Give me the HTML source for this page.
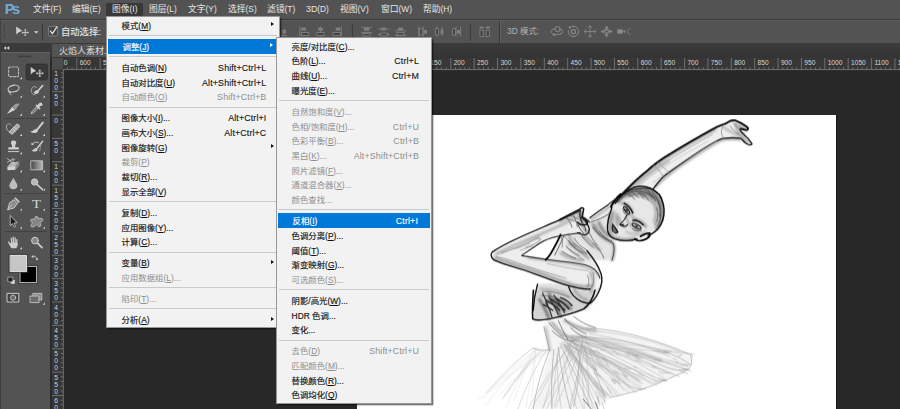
<!DOCTYPE html>
<html lang="zh-CN">
<head>
<meta charset="utf-8">
<title>Photoshop</title>
<style>
html,body{margin:0;padding:0;}
body{width:900px;height:409px;overflow:hidden;position:relative;background:#282828;font-family:"Liberation Sans","Noto Sans CJK SC",sans-serif;}
.abs{position:absolute;}
#menubar{left:0;top:0;width:900px;height:19px;background:#535353;}
#menubar .mi{position:absolute;top:3px;height:13px;line-height:13px;font-size:8.8px;color:#e6e6e6;white-space:nowrap;}
#menubar .mi .p{font-size:8.3px;}
#menubar .act{position:absolute;left:106px;top:3px;width:37px;height:13px;background:#383838;border-radius:1px;}
#mbline{left:0;top:19px;width:900px;height:1px;background:#3a3a3a;}
#optbar{left:0;top:20px;width:900px;height:23px;background:#535353;border-top:1px solid #5f5f5f;box-sizing:border-box;}
#optline{left:0;top:43px;width:900px;height:1px;background:#3a3a3a;}
#tabstrip{left:50.4px;top:44px;width:850px;height:14px;background:linear-gradient(#3b3b3b,#343434);}
#tab{left:52px;top:44px;width:100px;height:12.8px;background:#535353;color:#dcdcdc;font-size:9px;line-height:15px;padding-left:7px;box-sizing:border-box;white-space:nowrap;}
#tools{left:0;top:44px;width:50.4px;height:365px;background:#535353;border-left:1px solid #3e3e3e;box-sizing:border-box;}
#toolshead{left:1px;top:44px;width:49.4px;height:8.4px;background:#3a3a3a;border-bottom:0.6px solid #626262;}
#hruler{left:52px;top:58px;width:848px;height:12px;background:#3c3c3c;}
#vruler{left:52px;top:58px;width:11px;height:351px;background:#3c3c3c;}
#canvasimg{left:357px;top:114.7px;width:478.5px;height:295px;background:#fff;box-shadow:1px 0 0 #1a1a1a;}
.menu{position:absolute;background:#f2f2f2;border:1px solid #979797;box-shadow:1.5px 1.5px 1.5px rgba(0,0,0,0.55);box-sizing:border-box;font-size:8.4px;color:#111;}
.menu .it{position:absolute;left:0;right:0;height:14.7px;line-height:14.7px;white-space:nowrap;}
.menu .it .l{position:absolute;left:14px;top:1.0px;-webkit-text-stroke:0.15px currentColor;}
.menu .it .r{position:absolute;right:13px;top:1.0px;font-size:8.9px;letter-spacing:0.12px;-webkit-text-stroke:0.1px currentColor;}
.menu .it .ar{position:absolute;right:4.5px;top:4.4px;width:0;height:0;border-left:3.7px solid #111;border-top:2.8px solid transparent;border-bottom:2.8px solid transparent;}
.menu .hl .ar{border-left-color:#fff;}
.menu u{text-decoration:underline;text-underline-offset:1px;text-decoration-thickness:0.7px;}
.menu .dis{color:#8e8e8e;}
.menu .dis .l,.menu .dis .r{-webkit-text-stroke:0 !important;}
.menu .hl{background:#0078d7;color:#fff;left:1px;right:1px;}
.menu .sep{position:absolute;left:2px;right:2px;height:1px;background:#c9c9c9;}
</style>
</head>
<body>
<div id="menubar" class="abs">
<div class="act"></div>
<svg class="abs" style="left:4px;top:2px" width="18" height="14"><text x="0.8" y="11.8" font-family="Liberation Sans,sans-serif" font-weight="bold" font-size="14.5" fill="#74a9dc" textLength="15.4">Ps</text></svg>
<span class="mi" style="left:33px">文件<span class="p">(F)</span></span>
<span class="mi" style="left:72px">编辑<span class="p">(E)</span></span>
<span class="mi" style="left:112px">图像<span class="p">(I)</span></span>
<span class="mi" style="left:149px">图层<span class="p">(L)</span></span>
<span class="mi" style="left:188px">文字<span class="p">(Y)</span></span>
<span class="mi" style="left:228px">选择<span class="p">(S)</span></span>
<span class="mi" style="left:267px">滤镜<span class="p">(T)</span></span>
<span class="mi" style="left:306px">3D<span class="p">(D)</span></span>
<span class="mi" style="left:340px">视图<span class="p">(V)</span></span>
<span class="mi" style="left:381px">窗口<span class="p">(W)</span></span>
<span class="mi" style="left:423px">帮助<span class="p">(H)</span></span>
</div>
<div id="mbline" class="abs"></div>
<div id="optbar" class="abs"></div>
<div id="optline" class="abs"></div>
<!--OPT-->
<svg id="optsvg" class="abs" style="left:0;top:0" width="900" height="44" viewBox="0 0 900 44">
<!-- gripper -->
<path d="M4,25 V39" stroke="#424242" stroke-width="1.6" stroke-dasharray="1 1" fill="none"/><path d="M0.5,20 V43" stroke="#444" stroke-width="1"/>
<!-- move tool icon -->
<path d="M16.2,26.4 L16.2,34.6 L18.4,32.6 L22.2,30.8 Z" fill="#cfcfcf"/>
<g stroke="#cfcfcf" fill="none" stroke-width="0.9"><path d="M25.2,29.4 V35.8 M22,32.6 H28.4"/><path d="M24.3,30.4 L25.2,29.3 L26.1,30.4 M24.3,34.8 L25.2,35.9 L26.1,34.8 M23,31.7 L21.9,32.6 L23,33.5 M27.4,31.7 L28.5,32.6 L27.4,33.5" stroke-width="0.7"/></g>
<path d="M34,31.2 H38.4 L36.2,33.6 Z" fill="#d8d8d8"/>
<path d="M42.5,24 V40.5" stroke="#3a3a3a" stroke-width="1"/>
<!-- checkbox -->
<rect x="48.4" y="26.4" width="9.2" height="9.6" rx="1.4" fill="#454545" stroke="#8a8a8a" stroke-width="0.8"/>
<path d="M50,30.6 L52.4,33.6 L57.2,26.4" stroke="#e0e0e0" stroke-width="1.3" fill="none"/>
<!-- align icons (dim) -->
<g stroke="#858585" stroke-width="0.8" fill="none">
<rect x="282.4" y="29.6" width="3.6" height="4.2" fill="#7c7c7c" stroke="none"/><path d="M281,35.6 H287"/>
<path d="M299.8,26.5 V36.5"/><rect x="301.2" y="27.6" width="4.8" height="3" fill="#808080" stroke="none"/><rect x="301.4" y="32.6" width="7.4" height="2.8" fill="#444"/>
<path d="M320.5,26.5 V36.5"/><rect x="318.2" y="27.6" width="4.8" height="3" fill="#808080" stroke="none"/><rect x="316.8" y="32.6" width="7.4" height="2.8" fill="#444"/>
<path d="M341.3,26.5 V36.5"/><rect x="335.6" y="27.6" width="4.8" height="3" fill="#808080" stroke="none"/><rect x="333" y="32.6" width="7.4" height="2.8" fill="#444"/>
<!-- distribute -->
<path d="M361,27.4 H372.2 M361,32.4 H372.2"/><rect x="364" y="28" width="5.4" height="2.6" fill="#808080" stroke="none"/><rect x="363.2" y="33.4" width="7" height="2.6" fill="#444"/>
<path d="M378,29 H389.4 M378,34.5 H389.4"/><rect x="381.4" y="27.6" width="4.8" height="2.8" fill="#808080" stroke="none"/><rect x="380.2" y="33.2" width="7.2" height="2.6" fill="#444"/>
<path d="M395,30.8 H406.4 M395,35.6 H406.4"/><rect x="398" y="27.6" width="5" height="2.6" fill="#808080" stroke="none"/><rect x="397" y="32.4" width="7" height="2.6" fill="#444"/>
<path d="M418.7,26.5 V36.5 M423.2,26.5 V36.5"/><rect x="419.6" y="28.6" width="2.6" height="6.4" fill="#444"/><rect x="424" y="30" width="3" height="3.6" fill="#808080" stroke="none"/>
<path d="M437,26.5 V36.5 M442,27 V36"/><rect x="435.6" y="28.6" width="2.8" height="6.4" fill="#444"/><rect x="440.6" y="29.6" width="2.8" height="4.4" fill="#808080" stroke="none"/>
<path d="M456,26.5 V36.5 M460.6,26.5 V36.5"/><rect x="452.6" y="28.6" width="2.8" height="6.4" fill="#444"/><rect x="457" y="30" width="3" height="3.6" fill="#808080" stroke="none"/>
<!-- auto align -->
<rect x="479.6" y="26.6" width="4" height="2" fill="#808080" stroke="none"/><rect x="479.9" y="30.2" width="3.4" height="6.2" fill="#444"/>
<rect x="485.8" y="26.6" width="4" height="2" fill="#808080" stroke="none"/><rect x="486.1" y="30.2" width="3.4" height="6.2" fill="#444"/>
</g>
<path d="M352.4,24 V40.5 M470.5,24 V40.5" stroke="#3a3a3a" stroke-width="1"/>
<path d="M499.5,21 V43" stroke="#3a3a3a" stroke-width="1"/><path d="M500.5,21 V43" stroke="#626262" stroke-width="1"/>
<!-- 3D icons -->
<g stroke="#8c8c8c" stroke-width="1" fill="none" stroke-linecap="round">
<circle cx="557.6" cy="29.2" r="2.6"/><path d="M554.6,29 C551,29.4 549.6,32 552.6,33.6 C556,35.2 561.6,34.6 562.6,32.4 C563.2,31 561.6,29.8 560.4,29.6"/><path d="M552.4,35.8 L555.4,35.8 L553.6,33.4 Z" fill="#8c8c8c" stroke="none"/>
<path d="M569.8,27.6 A5.2,5.2 0 1 1 568.2,30.6"/><circle cx="573.4" cy="31.6" r="2.1" stroke-width="1.2"/><path d="M568.6,26.6 L571.4,26.8 L569.6,29.4 Z" fill="#8c8c8c" stroke="none"/>
<g stroke-width="0.8"><path d="M590,26 V37 M584.4,31.5 H595.6"/><path d="M588.4,27.6 L590,25.8 L591.6,27.6 M588.4,35.4 L590,37.2 L591.6,35.4 M586,29.9 L584.2,31.5 L586,33.1 M594,29.9 L595.8,31.5 L594,33.1"/></g>
<circle cx="606.6" cy="31.5" r="1.9" stroke-width="1.1"/>
<path d="M605,28.4 L606.6,26 L608.2,28.4 Z M605,34.6 L606.6,37 L608.2,34.6 Z M603.4,29.9 L601,31.5 L603.4,33.1 Z M609.8,29.9 L612.2,31.5 L609.8,33.1 Z" fill="#8c8c8c" stroke-width="0.5"/>
<rect x="617.4" y="29.4" width="5.4" height="4.2" fill="#8c8c8c" stroke="none"/><path d="M623,31.5 L625.2,29.8 V33.2 Z" fill="#8c8c8c" stroke="none"/>
<path d="M630,28.2 L626.8,31.5 L630,34.8" stroke-width="0.8"/>
</g>
</svg>
<div class="abs" style="left:61px;top:24.5px;font-size:9.3px;line-height:14px;color:#e4e4e4;white-space:nowrap;-webkit-text-stroke:0.12px #e4e4e4">自动选择:</div>
<div class="abs" style="left:507px;top:24.2px;font-size:8.4px;line-height:14px;color:#b2b2b2;white-space:nowrap;">3D 模式:</div>
<!--/OPT-->
<div id="tabstrip" class="abs"></div>
<div id="tab" class="abs">火焰人素材.jpg</div>
<div id="tools" class="abs"></div>
<div id="toolshead" class="abs"></div>
<!--TOOLS-->
<svg id="toolsvg" class="abs" style="left:0;top:0" width="52" height="409" viewBox="0 0 52 409">
<g fill="none" stroke="#cfcfcf" stroke-width="1" stroke-linecap="round" stroke-linejoin="round">
<!-- collapse arrows -->
<path d="M6.2,46 L3.8,48 L6.2,50 Z M9.2,46 L6.8,48 L9.2,50 Z" fill="#d6d6d6" stroke="none"/>
<!-- grip -->
<rect x="18" y="55.6" width="13.5" height="1.6" fill="#3c3c3c" stroke="none"/>
<!-- selected button -->
<rect x="26" y="64" width="21.5" height="16" rx="2" fill="#383838" stroke="#303030" stroke-width="0.8"/>
<!-- marquee -->
<rect x="8.6" y="67" width="9.9" height="9.6" rx="1" stroke-dasharray="2.1 1.45" stroke-dashoffset="1" stroke-width="1.1" stroke="#b8b8b8"/>
<!-- move -->
<path d="M30.8,67 L30.8,74.6 L32.8,72.6 L36.2,71 Z" fill="#cfcfcf" stroke="none"/>
<path d="M39.8,70 L39.8,76.6 M36.5,73.3 L43.1,73.3" stroke-width="0.9"/>
<path d="M38.9,71 L39.8,69.9 L40.7,71 M38.9,75.6 L39.8,76.7 L40.7,75.6 M37.5,72.4 L36.4,73.3 L37.5,74.2 M42.1,72.4 L43.2,73.3 L42.1,74.2" stroke-width="0.7"/>
<!-- lasso -->
<ellipse cx="13.6" cy="88.6" rx="5.6" ry="3.3" transform="rotate(-12 13.6 88.6)" stroke-width="1.1"/>
<path d="M9.2,91.2 C8.2,92 8.8,93.2 10,92.8 C11,92.4 10.6,91.4 9.6,91.8 C9.8,93 10.3,94 11,95" stroke-width="0.8"/>
<!-- quick select -->
<path d="M36.4,87.4 C33.4,85 30.8,88.5 31.4,91.5 C32,94 33.6,95 35.4,94.8" stroke-width="0.8" stroke="#bdbdbd" stroke-dasharray="1.6 0.8"/>
<path d="M42.6,85.6 L37.8,91" stroke-width="1.6"/>
<path d="M33.8,93 C34.4,90.4 37.2,89.6 39,91 C39,93.8 36,95 33.8,93 Z" fill="#cfcfcf" stroke="none"/>
<!-- slice knife -->
<path d="M6.8,114 L12.2,106.8 L15.4,109.8 Z" fill="#d0d0d0" stroke="none"/>
<path d="M12.6,106.4 L15.4,103.8 L19.9,103.5 L15.6,109.6 Z" fill="#9c9c9c" stroke="none"/>
<!-- eyedropper -->
<path d="M31.2,113.4 L32,111.4 L36.6,106.6 L38.2,108.2 L33.4,112.8 Z" stroke-width="0.8" fill="#777"/>
<path d="M36.4,105.4 L39.6,108.6" stroke-width="1.5"/>
<path d="M37.8,106.6 L40.4,104" stroke-width="2.6"/>
<circle cx="40.8" cy="104.4" r="1.7" fill="#cfcfcf" stroke="none"/>
<!-- healing brush -->
<path d="M11.2,125.2 C9.4,122.6 6.4,123.6 6.4,127 C6.6,130 8.6,132 10,132.6" stroke-width="0.8" stroke="#bdbdbd"/>
<path d="M10,131 L16.4,124.4 C17.6,123.2 20.4,125.8 19.2,127.2 L12.8,133.8 C11.4,135 8.8,132.4 10,131 Z" fill="#a8a8a8" stroke="#d4d4d4" stroke-width="0.8"/>
<path d="M12.4,128.4 L15.2,131.2 M14,126.8 L16.8,129.6" stroke="#e6e6e6" stroke-width="0.6"/>
<!-- brush -->
<path d="M42.8,122.6 L37.4,129.4" stroke-width="1.9"/>
<path d="M30.2,131.6 C32.6,131.6 34,129.4 35.8,128.8 C37.4,129.2 38,130.4 37.8,131.4 C36,133.6 32.4,133.6 30.2,131.6 Z" fill="#cfcfcf" stroke="none"/>
<!-- stamp -->
<path d="M12,141 C10.2,141.6 11,144 12,145.4 L12,147.2 L8.4,147.2 L8.4,149.6 L18.8,149.6 L18.8,147.2 L15.2,147.2 L15.2,145.4 C16.2,144 17,141.6 15.2,141 C14.2,140.4 13,140.4 12,141 Z" fill="#cfcfcf" stroke="none"/>
<path d="M8.4,151.6 L18.8,151.6" stroke-width="1"/>
<!-- history brush -->
<path d="M42.6,141.2 L37.4,148" stroke-width="1.4"/>
<path d="M31.6,150.4 C33.4,150.2 34.4,148.4 36,147.8 C37.4,148.2 37.8,149.2 37.6,150.2 C36,152 33.4,152 31.6,150.4 Z" fill="#cfcfcf" stroke="none"/>
<path d="M32,144.6 C33.4,142 36.4,141.6 38.4,142.6" stroke-width="0.9"/>
<path d="M31.2,142.6 L31.8,145 L34.2,144.6 Z" fill="#cfcfcf" stroke="none"/>
<path d="M40.6,146 L39.6,151.6" stroke-width="0.6" stroke-dasharray="1 1"/>
<!-- eraser -->
<path d="M7.4,166.4 L11,162.4 L19.4,161.4 L15.6,166 Z" fill="#b4b4b4" stroke="none"/>
<path d="M7.4,166.4 L15.6,166 L15.6,169.8 L7.4,170.2 Z" fill="#d4d4d4" stroke="none"/>
<path d="M15.6,166 L19.4,161.4 L19.4,165.2 L15.6,169.8 Z" fill="#8a8a8a" stroke="none"/>
<path d="M7.4,158.6 L12.6,162.6 M7.4,162.4 L12.8,159" stroke-width="0.8"/>
<circle cx="13.4" cy="159.6" r="1" stroke-width="0.6"/>
<circle cx="13.2" cy="163" r="1" stroke-width="0.6"/>
<!-- gradient -->
<rect x="31.2" y="160.8" width="11.4" height="9" fill="url(#gradtool)" stroke="#d0d0d0" stroke-width="0.8"/>
<!-- blur drop -->
<path d="M13.4,177.4 C12.6,180 9.2,183.4 9.4,186 C9.6,188.2 11.4,189.2 13.4,189.2 C15.4,189.2 17.2,188.2 17.4,186 C17.6,183.4 14.2,180 13.4,177.4 Z" fill="#bdbdbd" stroke="none"/>
<!-- dodge -->
<circle cx="34.6" cy="182" r="3.2" fill="#b8b8b8" stroke="#d0d0d0" stroke-width="0.8"/>
<path d="M37.2,184.6 L42.6,189.6" stroke-width="1.5"/>
<!-- pen -->
<path d="M7.8,209.4 L9.6,202.8 L14,199.6 L17.6,203.2 L14.4,207.6 Z" fill="#8c8c8c" stroke="#d4d4d4" stroke-width="0.9"/>
<path d="M7.8,209.4 L12.2,205" stroke-width="0.7"/>
<path d="M14.8,198.6 L18.8,202.6 L19.6,201.8 L15.6,197.8 Z" fill="#d4d4d4" stroke-width="0.6"/>
<!-- path select arrow -->
<path d="M10.2,215.8 L10.2,225.6 L12.4,223.6 L14,227.2 L15.6,226.4 L14,223 L16.8,222.8 Z" fill="#1c1c1c" stroke="#c8c8c8" stroke-width="0.8"/>
<!-- custom shape -->
<path d="M36,216.6 C37.6,216 38.6,217.6 38.4,219 C40,218 42.6,218 42.8,219.8 C43,221.6 40.6,222 39.8,222.8 C40.8,224 41.4,226 40,226.6 C38.4,227.2 37.4,225.4 36.4,224.6 C35.4,226 33.2,227.8 31.6,226.8 C30.2,225.8 31.6,223.6 32.6,222.6 C31.2,222 30,220.6 31,219.6 C32,218.6 33.8,219.4 34.8,219.4 C34.6,218.4 34.8,217 36,216.6 Z" fill="#858585" stroke="#c4c4c4" stroke-width="0.8"/>
<!-- hand -->
<path d="M11.3,238.4 L11.7,243.4 M13.2,237.2 L13.4,243.4 M15.1,237.8 L15.1,243.4 M16.9,239.6 L16.7,244" stroke="#cfcfcf" stroke-width="1.3"/>
<path d="M8.5,242.2 L10.8,245.6" stroke="#cfcfcf" stroke-width="1.4"/>
<path d="M10.6,243 L17.4,243 L17.3,245.8 L16.2,248 L11.4,248 L10.2,245.8 Z" fill="#cfcfcf" stroke="#cfcfcf" stroke-width="0.5"/>
<!-- zoom -->
<circle cx="35" cy="240.6" r="3.4" fill="#8a8a8a" stroke="#d0d0d0" stroke-width="1"/>
<path d="M37.8,243.4 L42,247.6" stroke-width="1.7"/>
<!-- swap -->
<path d="M32.4,256.4 C34.6,255.6 36.8,257 37,259.4" stroke-width="0.8"/>
<path d="M31.2,256.8 L33.4,255 L33.4,258 Z M35.6,258.6 L38.4,258.6 L37,260.8 Z" fill="#cfcfcf" stroke="none"/>
<!-- bg swatch -->
<rect x="20.3" y="266.3" width="16.4" height="16.4" fill="#000" stroke="#e8e8e8" stroke-width="0.9"/>
<rect x="19.4" y="265.4" width="18.2" height="18.2" stroke="#2e2e2e" stroke-width="0.7"/>
<!-- fg swatch -->
<rect x="10.3" y="255.3" width="16.4" height="16.4" fill="#c6c6c6" stroke="#f0f0f0" stroke-width="0.9"/>
<rect x="9.4" y="254.4" width="18.2" height="18.2" stroke="#2e2e2e" stroke-width="0.7"/>
<!-- default colors -->
<rect x="10.6" y="279.6" width="4.6" height="4.6" fill="#ddd" stroke="#333" stroke-width="0.6"/>
<rect x="8.2" y="277.2" width="4.6" height="4.6" fill="#222" stroke="#ccc" stroke-width="0.6"/>
<!-- quick mask -->
<rect x="7.4" y="293.4" width="11.4" height="8.6" stroke="#d8d8d8" stroke-width="0.9" fill="#444"/>
<circle cx="13.1" cy="297.7" r="2.6" stroke="#cfcfcf" stroke-width="0.8" fill="#6a6a6a"/>
<!-- screen mode -->
<rect x="33.2" y="293.4" width="8.6" height="6.6" stroke="#cfcfcf" stroke-width="0.8" fill="#888"/>
<rect x="30.4" y="296" width="8.6" height="6.6" stroke="#cfcfcf" stroke-width="0.8" fill="#6c6c6c"/>
</g>
<!-- separators -->
<g stroke="#414141" stroke-width="1">
<path d="M4,118.5 L47,118.5 M4,193.5 L47,193.5 M4,231.5 L47,231.5"/>
</g>
<!-- corner triangles -->
<g fill="#d8d8d8">
<path d="M22,77 L22,79.2 L19.8,79.2 Z M22,95.4 L22,97.6 L19.8,97.6 Z M45,95.4 L45,97.6 L42.8,97.6 Z M22,113.6 L22,115.8 L19.8,115.8 Z M45,113.6 L45,115.8 L42.8,115.8 Z M22,133.8 L22,136 L19.8,136 Z M45,133.8 L45,136 L42.8,136 Z M22,152 L22,154.2 L19.8,154.2 Z M45,152 L45,154.2 L42.8,154.2 Z M22,170 L22,172.2 L19.8,172.2 Z M45,170 L45,172.2 L42.8,172.2 Z M22,188.4 L22,190.6 L19.8,190.6 Z M45,188.4 L45,190.6 L42.8,190.6 Z M22,208.4 L22,210.6 L19.8,210.6 Z M45,208.4 L45,210.6 L42.8,210.6 Z M22,226.4 L22,228.6 L19.8,228.6 Z M45,226.4 L45,228.6 L42.8,228.6 Z M22,247 L22,249.2 L19.8,249.2 Z M45,302.6 L45,304.8 L42.8,304.8 Z"/>
</g>
<defs><linearGradient id="gradtool" x1="0" x2="1" y1="0" y2="0"><stop offset="0" stop-color="#4a4a4a"/><stop offset="1" stop-color="#b8b8b8"/></linearGradient></defs>
<text x="32" y="208.4" font-family="Liberation Serif,serif" font-size="13.5" fill="#d4d4d4" textLength="9" lengthAdjust="spacingAndGlyphs">T</text>
</svg>
<!--/TOOLS-->
<!--RULERS-->
<svg id="rulers" class="abs" style="left:0;top:0" width="900" height="409" viewBox="0 0 900 409">
<rect x="50.4" y="58" width="2" height="351" fill="#2c2c2c"/>
<rect x="52" y="58" width="848" height="12" fill="#373737"/>
<rect x="52" y="58" width="11.5" height="351" fill="#373737"/>
<rect x="52" y="58" width="11" height="11.5" fill="#4c4c4c"/>
<path d="M67.45,67.3 V69.5 M72.13,67.3 V69.5 M81.48,67.3 V69.5 M86.15,67.3 V69.5 M90.83,67.3 V69.5 M95.50,67.3 V69.5 M104.85,67.3 V69.5 M109.53,67.3 V69.5 M114.20,67.3 V69.5 M118.88,67.3 V69.5 M128.23,67.3 V69.5 M132.90,67.3 V69.5 M137.58,67.3 V69.5 M142.25,67.3 V69.5 M151.60,67.3 V69.5 M156.28,67.3 V69.5 M160.95,67.3 V69.5 M165.62,67.3 V69.5 M174.98,67.3 V69.5 M179.65,67.3 V69.5 M184.33,67.3 V69.5 M189.00,67.3 V69.5 M198.35,67.3 V69.5 M203.03,67.3 V69.5 M207.70,67.3 V69.5 M212.38,67.3 V69.5 M221.73,67.3 V69.5 M226.40,67.3 V69.5 M231.08,67.3 V69.5 M235.75,67.3 V69.5 M245.10,67.3 V69.5 M249.78,67.3 V69.5 M254.45,67.3 V69.5 M259.12,67.3 V69.5 M268.48,67.3 V69.5 M273.15,67.3 V69.5 M277.82,67.3 V69.5 M282.50,67.3 V69.5 M291.85,67.3 V69.5 M296.53,67.3 V69.5 M301.20,67.3 V69.5 M305.88,67.3 V69.5 M315.23,67.3 V69.5 M319.90,67.3 V69.5 M324.57,67.3 V69.5 M329.25,67.3 V69.5 M338.60,67.3 V69.5 M343.28,67.3 V69.5 M347.95,67.3 V69.5 M352.62,67.3 V69.5 M361.98,67.3 V69.5 M366.65,67.3 V69.5 M371.32,67.3 V69.5 M376.00,67.3 V69.5 M385.35,67.3 V69.5 M390.03,67.3 V69.5 M394.70,67.3 V69.5 M399.38,67.3 V69.5 M408.73,67.3 V69.5 M413.40,67.3 V69.5 M418.07,67.3 V69.5 M422.75,67.3 V69.5 M432.10,67.3 V69.5 M436.78,67.3 V69.5 M441.45,67.3 V69.5 M446.12,67.3 V69.5 M455.48,67.3 V69.5 M460.15,67.3 V69.5 M464.82,67.3 V69.5 M469.50,67.3 V69.5 M478.85,67.3 V69.5 M483.53,67.3 V69.5 M488.20,67.3 V69.5 M492.88,67.3 V69.5 M502.23,67.3 V69.5 M506.90,67.3 V69.5 M511.57,67.3 V69.5 M516.25,67.3 V69.5 M525.60,67.3 V69.5 M530.27,67.3 V69.5 M534.95,67.3 V69.5 M539.62,67.3 V69.5 M548.97,67.3 V69.5 M553.65,67.3 V69.5 M558.32,67.3 V69.5 M563.00,67.3 V69.5 M572.35,67.3 V69.5 M577.02,67.3 V69.5 M581.70,67.3 V69.5 M586.38,67.3 V69.5 M595.72,67.3 V69.5 M600.40,67.3 V69.5 M605.07,67.3 V69.5 M609.75,67.3 V69.5 M619.10,67.3 V69.5 M623.77,67.3 V69.5 M628.45,67.3 V69.5 M633.12,67.3 V69.5 M642.47,67.3 V69.5 M647.15,67.3 V69.5 M651.82,67.3 V69.5 M656.50,67.3 V69.5 M665.85,67.3 V69.5 M670.52,67.3 V69.5 M675.20,67.3 V69.5 M679.88,67.3 V69.5 M689.22,67.3 V69.5 M693.90,67.3 V69.5 M698.57,67.3 V69.5 M703.25,67.3 V69.5 M712.60,67.3 V69.5 M717.27,67.3 V69.5 M721.95,67.3 V69.5 M726.62,67.3 V69.5 M735.97,67.3 V69.5 M740.65,67.3 V69.5 M745.32,67.3 V69.5 M750.00,67.3 V69.5 M759.35,67.3 V69.5 M764.02,67.3 V69.5 M768.70,67.3 V69.5 M773.38,67.3 V69.5 M782.72,67.3 V69.5 M787.40,67.3 V69.5 M792.07,67.3 V69.5 M796.75,67.3 V69.5 M806.10,67.3 V69.5 M810.77,67.3 V69.5 M815.45,67.3 V69.5 M820.12,67.3 V69.5 M829.47,67.3 V69.5 M834.15,67.3 V69.5 M838.82,67.3 V69.5 M843.50,67.3 V69.5 M852.85,67.3 V69.5 M857.52,67.3 V69.5 M862.20,67.3 V69.5 M866.88,67.3 V69.5 M876.22,67.3 V69.5 M880.90,67.3 V69.5 M885.57,67.3 V69.5 M890.25,67.3 V69.5 M899.60,67.3 V69.5" stroke="#8a8a8a" stroke-width="0.7" fill="none"/>
<path d="M76.80,58 V69.5 M100.18,58 V69.5 M123.55,58 V69.5 M146.93,58 V69.5 M170.30,58 V69.5 M193.68,58 V69.5 M217.05,58 V69.5 M240.43,58 V69.5 M263.80,58 V69.5 M287.18,58 V69.5 M310.55,58 V69.5 M333.93,58 V69.5 M357.30,58 V69.5 M380.68,58 V69.5 M404.05,58 V69.5 M427.43,58 V69.5 M450.80,58 V69.5 M474.18,58 V69.5 M497.55,58 V69.5 M520.92,58 V69.5 M544.30,58 V69.5 M567.67,58 V69.5 M591.05,58 V69.5 M614.42,58 V69.5 M637.80,58 V69.5 M661.17,58 V69.5 M684.55,58 V69.5 M707.92,58 V69.5 M731.30,58 V69.5 M754.67,58 V69.5 M778.05,58 V69.5 M801.42,58 V69.5 M824.80,58 V69.5 M848.17,58 V69.5 M871.55,58 V69.5 M894.92,58 V69.5" stroke="#7c7c7c" stroke-width="0.8" fill="none"/>
<path d="M60.8,72.92 H63 M60.8,77.60 H63 M60.8,82.28 H63 M60.8,86.95 H63 M60.8,96.30 H63 M60.8,100.97 H63 M60.8,105.65 H63 M60.8,110.33 H63 M60.8,119.67 H63 M60.8,124.35 H63 M60.8,129.03 H63 M60.8,133.70 H63 M60.8,143.05 H63 M60.8,147.72 H63 M60.8,152.40 H63 M60.8,157.07 H63 M60.8,166.43 H63 M60.8,171.10 H63 M60.8,175.78 H63 M60.8,180.45 H63 M60.8,189.80 H63 M60.8,194.47 H63 M60.8,199.15 H63 M60.8,203.82 H63 M60.8,213.18 H63 M60.8,217.85 H63 M60.8,222.53 H63 M60.8,227.20 H63 M60.8,236.55 H63 M60.8,241.22 H63 M60.8,245.90 H63 M60.8,250.57 H63 M60.8,259.93 H63 M60.8,264.60 H63 M60.8,269.27 H63 M60.8,273.95 H63 M60.8,283.30 H63 M60.8,287.98 H63 M60.8,292.65 H63 M60.8,297.32 H63 M60.8,306.68 H63 M60.8,311.35 H63 M60.8,316.02 H63 M60.8,320.70 H63 M60.8,330.05 H63 M60.8,334.73 H63 M60.8,339.40 H63 M60.8,344.07 H63 M60.8,353.43 H63 M60.8,358.10 H63 M60.8,362.77 H63 M60.8,367.45 H63 M60.8,376.80 H63 M60.8,381.48 H63 M60.8,386.15 H63 M60.8,390.82 H63 M60.8,400.18 H63 M60.8,404.85 H63" stroke="#8a8a8a" stroke-width="0.7" fill="none"/>
<path d="M52,91.62 H63 M52,115.00 H63 M52,138.38 H63 M52,161.75 H63 M52,185.12 H63 M52,208.50 H63 M52,231.88 H63 M52,255.25 H63 M52,278.62 H63 M52,302.00 H63 M52,325.38 H63 M52,348.75 H63 M52,372.12 H63 M52,395.50 H63" stroke="#7c7c7c" stroke-width="0.8" fill="none"/>
<path d="M63,69.6 H900 M63.3,69.2 V409" stroke="#767676" stroke-width="0.9" fill="none"/>
<g font-family="Liberation Sans,sans-serif" font-size="6.6" fill="#d6d6d6">
<clipPath id="hrc"><rect x="63.7" y="58" width="840" height="12"/></clipPath><g clip-path="url(#hrc)">
<text x="56.3" y="65.3">650</text>
<text x="79.7" y="65.3">600</text>
<text x="103.1" y="65.3">550</text>
<text x="126.5" y="65.3">500</text>
<text x="149.8" y="65.3">450</text>
<text x="173.2" y="65.3">400</text>
<text x="196.6" y="65.3">350</text>
<text x="220.0" y="65.3">300</text>
<text x="243.3" y="65.3">250</text>
<text x="266.7" y="65.3">200</text>
<text x="290.1" y="65.3">150</text>
<text x="313.4" y="65.3">100</text>
<text x="336.8" y="65.3">50</text>
<text x="360.2" y="65.3">0</text>
<text x="383.6" y="65.3">50</text>
<text x="406.9" y="65.3">100</text>
<text x="430.3" y="65.3">150</text>
<text x="453.7" y="65.3">200</text>
<text x="477.1" y="65.3">250</text>
<text x="500.4" y="65.3">300</text>
<text x="523.8" y="65.3">350</text>
<text x="547.2" y="65.3">400</text>
<text x="570.6" y="65.3">450</text>
<text x="593.9" y="65.3">500</text>
<text x="617.3" y="65.3">550</text>
<text x="640.7" y="65.3">600</text>
<text x="664.1" y="65.3">650</text>
<text x="687.4" y="65.3">700</text>
<text x="710.8" y="65.3">750</text>
<text x="734.2" y="65.3">800</text>
<text x="757.6" y="65.3">850</text>
<text x="780.9" y="65.3">900</text>
<text x="804.3" y="65.3">950</text>
<text x="827.7" y="65.3">1000</text>
<text x="851.1" y="65.3">1050</text>
<text x="874.4" y="65.3">1100</text>
<text x="897.8" y="65.3">1150</text>
</g>
<text x="54.2" y="75.8">1</text>
<text x="54.2" y="82.8">0</text>
<text x="54.2" y="89.8">0</text>
<text x="54.2" y="99.2">5</text>
<text x="54.2" y="106.2">0</text>
<text x="54.2" y="122.6">0</text>
<text x="54.2" y="146.0">5</text>
<text x="54.2" y="153.0">0</text>
<text x="54.2" y="169.3">1</text>
<text x="54.2" y="176.3">0</text>
<text x="54.2" y="183.3">0</text>
<text x="54.2" y="192.7">1</text>
<text x="54.2" y="199.7">5</text>
<text x="54.2" y="206.7">0</text>
<text x="54.2" y="216.1">2</text>
<text x="54.2" y="223.1">0</text>
<text x="54.2" y="230.1">0</text>
<text x="54.2" y="239.5">2</text>
<text x="54.2" y="246.5">5</text>
<text x="54.2" y="253.5">0</text>
<text x="54.2" y="262.9">3</text>
<text x="54.2" y="269.9">0</text>
<text x="54.2" y="276.9">0</text>
<text x="54.2" y="286.2">3</text>
<text x="54.2" y="293.2">5</text>
<text x="54.2" y="300.2">0</text>
<text x="54.2" y="309.6">4</text>
<text x="54.2" y="316.6">0</text>
<text x="54.2" y="323.6">0</text>
<text x="54.2" y="333.0">4</text>
<text x="54.2" y="340.0">5</text>
<text x="54.2" y="347.0">0</text>
<text x="54.2" y="356.4">5</text>
<text x="54.2" y="363.4">0</text>
<text x="54.2" y="370.4">0</text>
<text x="54.2" y="379.7">5</text>
<text x="54.2" y="386.7">5</text>
<text x="54.2" y="393.7">0</text>
<text x="54.2" y="403.1">6</text>
<text x="54.2" y="410.1">0</text>
</g>
</svg>
<!--/RULERS-->
<div id="canvasimg" class="abs"></div>
<!--SKETCH-->
<svg id="sketch" class="abs" style="left:357px;top:114.7px" width="479" height="295" viewBox="357 114.7 479 295">
<defs>
<filter id="soft" x="-5%" y="-5%" width="110%" height="110%"><feGaussianBlur stdDeviation="1.1"/></filter>
<filter id="soft2" x="-5%" y="-5%" width="110%" height="110%"><feGaussianBlur stdDeviation="0.35"/></filter>
</defs>
<!--FILLS-->
<g stroke="none" filter="url(#soft)" opacity="0.95">
<g transform="translate(620,110) scale(0.21993)">
<path d="M0,392 C40,350 80,310 118,280 C150,250 190,220 232,196 C290,160 350,125 432,80 C470,66 500,48 524,46 C556,60 580,80 580,88 L548,88 C560,112 600,150 600,154 C580,156 556,130 548,128 C500,124 450,132 404,160 C320,214 224,282 152,356 C120,380 60,400 0,392 Z" fill="#eeeeee"/>
<path d="M516,60 L572,72 L582,88 L548,90 L562,112 L600,154 L570,150 L546,128 L528,100 Z" fill="#b8b8b8"/>
</g>
<g transform="translate(560,170) scale(0.21997)">
<path d="M250,150 C270,120 300,92 340,76 C380,66 420,80 450,110 C476,150 476,204 430,280 L400,300 C350,322 280,322 250,312 C218,292 210,250 236,170 Z" fill="#e6e6e6"/>
<path d="M262,140 C300,96 360,70 420,84 C460,110 480,170 466,230 C450,200 430,150 400,130 C360,110 310,116 262,140 Z" fill="#b4b4b4"/>
<path d="M130,240 C170,220 220,190 244,160 C226,210 220,270 250,312 C250,350 244,390 236,409 L60,409 C40,380 20,340 0,300 C40,290 90,270 130,240 Z" fill="#e2e2e2"/>
<path d="M0,226 C30,208 60,192 96,174 C112,176 104,200 104,214 C124,234 136,262 132,280 C120,296 90,290 60,276 C40,268 20,260 0,250 Z" fill="#ebebeb"/>
</g>
<g transform="translate(480,200) scale(0.2689)">
<path d="M372,38 C290,76 130,146 46,192 C38,200 40,212 52,222 C120,246 210,274 310,312 C350,324 390,332 410,330 C440,320 450,290 446,290 C440,262 420,248 390,240 C300,226 230,218 156,206 C180,188 204,172 223,159 C262,140 320,128 373,121 Z" fill="#ececec"/>
<path d="M214,312 C206,340 200,370 198,409 L400,409 C420,380 450,340 452,300 C440,330 420,334 400,330 C340,320 280,300 214,312 Z" fill="#dedede"/>
<path d="M300,128 C330,120 380,150 400,190 C430,230 450,260 450,280 C440,256 400,240 360,234 C320,230 280,226 246,222 C270,190 290,150 300,128 Z" fill="#e8e8e8"/>
</g>
<g transform="translate(440,290) scale(0.3111)">
<path d="M300,0 L498,0 C492,26 480,46 462,60 C400,84 330,98 298,92 Z" fill="#d0d0d0"/>
<path d="M334,100 C380,96 430,84 470,120 C560,124 700,160 812,212 C812,240 800,256 760,274 C700,300 620,328 545,346 L500,382 L300,382 C320,300 340,250 352,192 Z" fill="#f3f3f3"/>
</g>
</g>
<!--/FILLS-->
<!-- soft shading layer -->
<g fill="none" stroke-linecap="round" stroke-linejoin="round" filter="url(#soft)" opacity="0.9">
<g transform="translate(620,110) scale(0.21993)">
<path d="M10,384 C50,344 90,306 128,278 C160,250 200,222 240,198 C300,162 360,128 436,86" stroke="#8c8c8c" stroke-width="9"/>
<path d="M160,350 C200,310 250,270 300,236 C350,202 400,170 450,140 C480,130 520,130 550,134" stroke="#9a9a9a" stroke-width="9"/>
<path d="M470,76 C490,90 520,110 560,124 M520,56 C540,70 560,84 576,96" stroke="#a0a0a0" stroke-width="8"/>
<path d="M80,340 C120,300 170,262 220,232" stroke="#bbb" stroke-width="14"/>
<path d="M10,390 C60,370 120,372 170,400" stroke="#777" stroke-width="10"/>
</g>
<g transform="translate(560,170) scale(0.21997)">
<path d="M262,140 C290,106 330,88 370,88 C410,92 440,116 458,150 C466,190 462,230 440,264" stroke="#777" stroke-width="16"/>
<path d="M330,110 C360,104 400,116 430,150 C440,180 440,210 430,236" stroke="#aaa" stroke-width="16"/>
<path d="M232,190 C222,230 222,270 232,296 C260,312 300,318 340,310" stroke="#8a8a8a" stroke-width="10"/>
<path d="M244,190 C236,220 234,250 240,276 M260,200 C256,220 256,236 262,250" stroke="#9a9a9a" stroke-width="12"/>
<path d="M300,214 C310,236 326,260 350,280 M320,200 C330,214 344,226 360,232" stroke="#aaa" stroke-width="12"/>
<path d="M150,246 C164,276 186,300 214,318 M176,236 C186,260 200,280 220,296" stroke="#777" stroke-width="12"/>
<path d="M90,200 C92,230 104,260 124,284" stroke="#8a8a8a" stroke-width="12"/>
<path d="M280,150 C300,150 320,166 330,190 M334,226 C354,224 376,236 390,256" stroke="#777" stroke-width="10"/>
<path d="M268,214 C270,236 276,250 296,258" stroke="#999" stroke-width="10"/>
<path d="M300,280 C330,296 360,296 390,280" stroke="#b4b4b4" stroke-width="10"/>
<path d="M160,250 C180,290 210,316 244,336 C250,360 244,390 238,409" stroke="#999" stroke-width="12"/>
<path d="M100,290 C130,320 150,340 180,360 M40,330 C70,356 100,376 130,400" stroke="#9a9a9a" stroke-width="12"/>
<path d="M0,232 C30,214 60,200 90,188 M96,186 C96,206 104,226 120,240" stroke="#888" stroke-width="10"/>
<path d="M140,226 C170,206 210,180 244,150" stroke="#999" stroke-width="10"/>
</g>
<g transform="translate(480,200) scale(0.2689)">
<path d="M60,200 C110,176 170,150 230,124 C280,102 330,80 370,60" stroke="#9a9a9a" stroke-width="8"/>
<path d="M56,214 C100,230 150,246 200,262 C250,280 300,300 350,316 C380,322 400,322 420,316" stroke="#8a8a8a" stroke-width="9"/>
<path d="M180,214 C230,222 290,228 340,236 C380,242 420,254 440,280" stroke="#aaa" stroke-width="8"/>
<path d="M250,372 C276,380 300,394 316,409 M280,366 C304,374 324,388 336,402" stroke="#666" stroke-width="12"/>
<path d="M226,330 C260,330 300,340 336,360" stroke="#aaa" stroke-width="10"/>
<path d="M330,130 C340,160 366,186 396,200 M300,196 C320,210 350,220 380,224" stroke="#999" stroke-width="9"/>
<path d="M410,270 C424,294 424,320 412,340 M350,330 C360,350 380,366 400,372" stroke="#999" stroke-width="8"/>
<path d="M120,170 C150,160 190,144 220,136" stroke="#aaa" stroke-width="8"/>
</g>
<g transform="translate(440,290) scale(0.3111)">
<path d="M350,10 C364,36 378,60 388,84 M320,30 C334,52 344,72 350,90" stroke="#666" stroke-width="9"/>
<path d="M360,104 C380,130 400,150 440,160 M400,96 C430,116 460,128 500,130" stroke="#999" stroke-width="8"/>
<path d="M430,150 C520,160 620,186 710,226 M420,166 C490,200 570,244 640,290 M400,176 C440,230 490,290 530,340" stroke="#c8c8c8" stroke-width="10"/>
<path d="M340,120 C346,146 350,170 354,192" stroke="#bbb" stroke-width="8"/>
</g>
</g>
<!-- line layer -->
<g fill="none" stroke-linecap="round" stroke-linejoin="round" filter="url(#soft2)">
<!-- Region A: raised arm -->
<g transform="translate(620,110) scale(0.21993)">
<path d="M0,392 C40,350 80,310 118,280 C150,250 190,220 232,196 C290,160 350,125 432,80 C450,70 470,66 488,56 C500,48 512,44 524,46 C540,52 556,60 572,72 C580,78 586,82 580,88 C570,92 556,84 548,84" stroke="#0a0a0a" stroke-width="8.5"/>
<path d="M546,88 C548,100 566,112 580,126 C590,138 600,150 600,154 C594,160 580,156 570,148 C560,140 556,130 548,128 C530,124 500,124 470,128 C450,132 430,144 404,160 C360,186 320,214 280,242 C250,262 224,282 200,300 C180,318 164,340 152,356" stroke="#1c1c1c" stroke-width="6.5"/>
<path d="M470,66 C460,84 456,104 470,126" stroke="#777" stroke-width="3"/>
<path d="M520,62 C530,76 540,86 548,92 M500,70 C512,86 520,100 540,108 M560,100 C570,112 580,124 588,140" stroke="#666" stroke-width="3"/>
<path d="M60,346 C100,310 150,270 200,240 C260,204 330,160 420,110" stroke="#999" stroke-width="3"/>
<path d="M150,330 C200,290 260,250 330,206 C370,180 410,156 440,140" stroke="#a8a8a8" stroke-width="3"/>
<path d="M100,330 C140,296 190,262 250,226 C300,196 350,168 400,140" stroke="#bbb" stroke-width="2.5"/>
<path d="M168,234 C190,250 210,270 226,290 M150,250 C170,262 186,280 196,300" stroke="#888" stroke-width="3"/>
<path d="M20,380 C50,360 90,352 130,356 C160,362 180,380 190,400" stroke="#222" stroke-width="5"/>
<path d="M40,392 C60,380 90,376 110,384 M80,370 C100,380 120,392 130,409 M130,370 C146,384 156,396 160,409" stroke="#555" stroke-width="3.5"/>
</g>
<!-- Region B: head -->
<g transform="translate(560,170) scale(0.21997)">
<path d="M250,150 C270,120 300,92 340,76 C380,66 420,80 450,110 C470,140 476,170 472,204 C468,236 452,262 430,280 C420,290 410,294 400,296" stroke="#0a0a0a" stroke-width="6.5"/>
<path d="M236,170 C224,200 214,240 216,270 C218,292 228,304 250,312 C280,322 320,322 350,312" stroke="#0a0a0a" stroke-width="6"/>
<path d="M340,312 C350,322 372,322 392,312 C406,304 412,294 408,286 C396,284 380,292 366,300" stroke="#000" stroke-width="8"/>
<path d="M232,166 C242,144 258,124 276,108" stroke="#000" stroke-width="9"/>
<path d="M262,146 C280,120 310,100 344,96 C380,94 410,106 432,130" stroke="#444" stroke-width="4"/>
<path d="M340,80 C350,100 370,110 380,128 M380,76 C392,96 410,108 420,130 M420,96 C430,116 446,130 450,156 M448,140 C456,160 458,186 452,210 M300,100 C316,114 330,118 340,132 M360,84 C366,100 380,108 392,118 M400,90 C410,110 424,120 436,140 M436,120 C446,140 452,160 456,180 M320,92 C330,104 344,110 356,124 M456,190 C460,210 456,230 446,250 M440,170 C446,190 446,210 440,230" stroke="#555" stroke-width="3.5"/>
<path d="M440,180 C450,200 446,230 430,250" stroke="#888" stroke-width="4"/>
<!-- eyes -->
<ellipse cx="303" cy="182" rx="21" ry="8" transform="rotate(56 303 182)" stroke="#0a0a0a" stroke-width="4.5" fill="#9a9a9a"/>
<ellipse cx="303" cy="182" rx="7" ry="6" transform="rotate(56 303 182)" stroke="none" fill="#333"/>
<path d="M292,150 C306,158 322,174 331,194" stroke="#111" stroke-width="6.5"/>
<path d="M286,176 C288,190 296,202 308,208" stroke="#444" stroke-width="3.5"/>
<ellipse cx="348" cy="254" rx="23" ry="9" transform="rotate(30 348 254)" stroke="#0a0a0a" stroke-width="4.5" fill="#a8a8a8"/>
<ellipse cx="348" cy="254" rx="7" ry="6" transform="rotate(30 348 254)" stroke="none" fill="#444"/>
<path d="M331,228 C346,226 364,234 378,248" stroke="#111" stroke-width="6.5"/>
<path d="M330,266 C342,276 356,278 370,274" stroke="#444" stroke-width="3.5"/>
<!-- nose -->
<path d="M304,204 C298,218 290,230 280,238 C272,244 274,252 284,252 C294,256 304,254 308,246" stroke="#1a1a1a" stroke-width="5"/>
<path d="M272,246 C278,250 284,250 288,246" stroke="#000" stroke-width="5"/>
<!-- lips -->
<path d="M240,246 C248,256 258,266 264,282 C256,290 246,286 240,276 C236,266 236,256 240,246 Z" stroke="#0a0a0a" stroke-width="4.5" fill="#666"/>
<path d="M244,252 C252,264 258,272 262,282" stroke="#000" stroke-width="3.5"/>
<!-- hand near chin -->
<path d="M98,214 C112,224 126,242 134,268 C132,284 122,292 112,294 C100,292 90,288 80,284" stroke="#111" stroke-width="5.5"/>
<path d="M80,238 C84,256 92,272 106,284 M102,240 C110,250 116,262 118,276" stroke="#333" stroke-width="4"/>
<path d="M20,214 C40,220 60,226 78,236 M40,204 C56,208 70,214 84,222" stroke="#666" stroke-width="3"/>

<path d="M0,225 C30,208 60,192 88,178 C96,170 104,166 108,176 C106,190 100,200 102,214 C108,224 118,226 124,234 C128,244 120,250 108,248 C96,250 86,244 80,236" stroke="#0a0a0a" stroke-width="6.5"/>
<path d="M92,182 C88,200 92,220 100,236 M108,214 C116,220 128,226 134,236" stroke="#1a1a1a" stroke-width="5"/>
<path d="M136,216 C160,196 190,176 214,160 C226,150 240,140 250,132" stroke="#1a1a1a" stroke-width="5.5"/>
<path d="M140,236 C170,226 200,214 226,196" stroke="#555" stroke-width="4"/>
<!-- neck & collar shading -->
<path d="M150,260 C170,290 200,310 240,330 C250,350 246,380 236,409" stroke="#444" stroke-width="4.5"/>
<path d="M128,270 C140,300 150,320 170,340 M100,300 C116,320 130,336 150,350 M60,330 C80,346 100,356 120,380 M180,280 C196,300 214,314 236,322 M150,330 C170,350 190,370 200,400" stroke="#555" stroke-width="3.5"/>
<path d="M30,350 C50,370 80,390 110,409 M0,290 C10,310 14,330 10,350 M20,300 C36,320 50,336 70,350" stroke="#666" stroke-width="3"/>
</g>
<!-- Region C: bent arm & torso -->
<g transform="translate(480,200) scale(0.2689)">
<path d="M372,38 C350,48 320,60 290,76 C240,98 180,122 130,146 C100,160 70,176 46,192 C38,200 40,212 52,222 C80,236 120,246 160,258 C210,274 260,296 310,312 C350,324 390,332 410,330" stroke="#0a0a0a" stroke-width="5"/>
<path d="M156,204 C180,188 204,172 223,159 C240,148 262,140 290,134 C320,128 350,124 373,121" stroke="#1a1a1a" stroke-width="4"/>
<path d="M318,62 C330,72 338,84 342,100 M342,50 C352,62 360,78 362,98" stroke="#555" stroke-width="3"/>
<path d="M156,206 C190,212 230,218 262,222 C300,226 350,232 390,240 C420,248 440,262 446,290" stroke="#2a2a2a" stroke-width="4"/>
<path d="M300,128 C290,150 276,176 262,200 C254,212 248,218 244,222" stroke="#000" stroke-width="6.5"/>
<path d="M312,132 C302,156 290,180 278,204" stroke="#444" stroke-width="3"/>
<path d="M398,188 C420,214 440,244 450,272 C458,296 452,320 440,344 C430,364 420,376 408,384" stroke="#0a0a0a" stroke-width="5"/>
<path d="M330,322 C336,344 352,364 376,376 C392,382 404,384 410,382" stroke="#0a0a0a" stroke-width="5"/>
<path d="M214,312 C206,340 200,370 198,409" stroke="#0a0a0a" stroke-width="5"/>
<path d="M244,372 C262,380 280,392 296,409 M262,368 C282,378 300,392 314,409 M282,366 C300,374 318,388 330,404 M236,388 C250,394 262,402 270,409 M300,362 C316,368 332,378 342,392" stroke="#222" stroke-width="5"/>
<path d="M232,340 C260,336 300,346 330,360 M226,356 C246,352 262,356 280,362" stroke="#777" stroke-width="3"/>
<path d="M80,196 C110,186 150,170 190,152 C210,142 222,138 226,146 C214,160 190,168 170,176" stroke="#777" stroke-width="2.6"/>
<path d="M130,180 C150,176 170,166 186,160 M150,186 C166,180 180,174 196,170" stroke="#888" stroke-width="2.2"/>
<path d="M60,210 C100,216 130,230 170,244 C220,260 270,276 320,290" stroke="#999" stroke-width="3"/>
<path d="M100,236 C150,250 200,268 250,286 C290,300 330,312 360,318" stroke="#aaa" stroke-width="2.6"/>
<path d="M250,236 C300,246 350,256 400,262" stroke="#aaa" stroke-width="3"/>
<path d="M330,150 C340,170 360,186 384,196 M320,170 C334,186 350,196 370,206 M306,190 C320,200 336,210 356,216 M350,140 C360,160 376,174 396,184" stroke="#555" stroke-width="2.8"/>
<path d="M420,270 C426,290 424,310 414,326 M400,280 C408,296 406,312 398,324" stroke="#777" stroke-width="3"/>
</g>
<!-- Region D: tutu -->
<g transform="translate(440,290) scale(0.3111)">
<path d="M300,0 C298,30 296,60 298,92 C310,98 330,96 352,92 C390,84 430,74 462,60 C480,46 492,26 498,0" stroke="#0a0a0a" stroke-width="4.8"/>
<path d="M350,20 C360,40 372,56 380,78 M366,16 C380,36 392,54 400,72 M340,40 C350,56 356,70 360,86 M330,10 C340,30 346,44 350,60" stroke="#333" stroke-width="4"/>
<path d="M334,118 C340,140 346,166 352,192 M352,192 C330,196 312,192 300,186" stroke="#888" stroke-width="2.2"/>
<path d="M380,96 C390,120 400,140 412,160 M400,92 C420,110 440,128 470,140 M430,84 C450,100 470,112 500,120 M360,130 C380,150 400,160 430,164 M350,104 C366,124 380,140 396,150 M420,120 C436,136 450,146 470,152" stroke="#666" stroke-width="2.6"/>
<g stroke="#8c8c8c" stroke-width="1.7">
<path d="M470,122 C560,124 650,148 740,180 C770,192 796,202 812,212"/>
<path d="M440,150 C540,150 640,170 730,200 C760,212 790,226 806,240"/>
<path d="M430,160 C520,176 620,200 700,236 C740,254 770,262 796,254"/>
<path d="M420,166 C500,196 580,230 650,270 C680,288 706,296 724,288"/>
<path d="M410,170 C470,210 540,256 600,300 C620,314 640,322 660,316"/>
<path d="M400,176 C440,226 490,280 540,336"/>
<path d="M390,180 C420,240 450,300 480,370"/>
<path d="M380,184 C390,250 400,320 420,382"/>
<path d="M366,190 C360,250 356,320 360,382"/>
<path d="M352,192 C330,250 310,310 300,382"/>
<path d="M806,212 C812,226 810,244 796,256 C770,270 740,282 716,292 C690,304 660,316 630,324 C600,332 570,340 545,344"/>
</g>
<g stroke="#b0b0b0" stroke-width="1.5">
<path d="M480,140 C560,150 650,176 740,214"/>
<path d="M470,156 C550,180 640,216 720,260"/>
<path d="M450,170 C520,210 590,256 650,300"/>
<path d="M430,184 C480,236 530,290 570,340"/>
<path d="M410,196 C440,260 470,320 500,382"/>
<path d="M394,206 C404,270 420,330 440,382"/>
<path d="M340,196 C310,240 280,300 250,382"/>
<path d="M320,196 C280,240 240,290 200,350"/>
<path d="M300,186 C250,220 200,270 150,330"/>
<path d="M500,132 C590,138 680,160 770,196"/>
<path d="M460,164 C540,200 620,240 690,280"/>
<path d="M440,176 C500,220 560,270 610,316"/>
<path d="M420,190 C460,250 500,310 530,360"/>
<path d="M400,200 C420,260 440,320 460,382"/>
<path d="M376,204 C376,260 380,320 390,382"/>
</g>
<!--EXTRA-->
<path d="M401,145 Q593,172 809,204 M463,180 Q642,187 819,206 M396,145 Q606,204 798,245 M452,150 Q633,205 801,240 M459,144 Q629,192 799,257 M423,144 Q617,197 808,260 M462,169 Q616,221 771,278 M434,162 Q601,202 751,269 M384,171 Q550,226 718,289 M470,150 Q599,210 722,283 M412,177 Q560,229 685,303 M386,151 Q534,223 697,304 M396,163 Q533,253 647,317 M446,188 Q559,257 647,311 M417,187 Q519,248 633,327 M420,147 Q519,224 627,329 M384,148 Q490,227 608,328 M468,161 Q518,233 592,323 M441,147 Q492,257 557,338 M391,166 Q498,251 578,337 M402,161 Q460,263 532,343 M455,165 Q486,244 532,340 M401,183 Q467,270 510,353 M469,160 Q508,268 531,362 M424,145 Q469,277 492,386 M410,173 Q468,278 508,382 M439,174 Q464,269 464,387 M467,188 Q482,270 475,373 M467,173 Q451,276 428,375 M447,186 Q451,266 432,372 M459,146 Q449,267 419,385 M459,150 Q448,271 415,377 M422,166 Q397,269 367,373 M458,170 Q421,275 370,378 M381,182 Q371,274 359,373 M451,156 Q410,256 343,380 M390,171 Q359,286 331,380 M450,143 Q385,269 331,375 M418,180 Q340,273 281,386 M424,157 Q364,258 291,386" stroke="#a4a4a4" stroke-width="1.2"/>
<path d="M495,242 l13,14 M573,252 l20,19 M498,295 l14,22 M538,312 l11,18 M627,212 l14,9 M495,263 l20,16 M498,252 l5,10 M686,224 l26,2 M548,281 l14,20 M770,258 l26,10 M526,177 l13,6 M518,318 l13,16 M505,340 l6,19 M556,259 l20,14 M526,222 l12,13 M593,250 l19,4 M496,266 l8,9 M566,204 l10,4 M773,240 l24,1 M555,287 l13,7 M682,246 l11,1 M718,289 l12,3 M629,212 l21,7 M552,290 l13,9 M560,259 l15,7 M594,272 l9,5 M765,210 l12,-1 M685,194 l23,3 M503,220 l16,21 M619,207 l21,1 M704,283 l22,8 M703,261 l14,7 M537,332 l11,9 M603,196 l19,6 M689,294 l19,4 M500,326 l16,18 M507,344 l6,24 M757,230 l10,3 M718,202 l14,-0 M636,268 l19,9 M479,189 l16,11 M621,245 l12,5 M483,190 l13,12 M584,269 l17,8 M497,191 l18,10 M597,204 l13,7 M465,224 l12,14 M779,253 l24,1 M488,236 l11,19 M521,361 l7,21 M478,231 l8,19 M604,200 l23,14 M714,193 l20,9 M628,224 l17,7 M535,236 l8,7 M533,193 l23,14 M594,277 l9,10 M501,234 l21,14 M559,285 l18,14 M625,209 l10,2 M570,287 l12,13 M516,190 l13,2 M704,198 l20,4 M721,194 l21,4 M462,215 l16,15 M522,213 l17,11 M488,246 l10,13 M718,264 l21,2 M556,195 l10,4 M749,219 l12,5" stroke="#8a8a8a" stroke-width="1.3"/>
<path d="M309,192 Q222,268 145,370 M338,191 Q285,220 246,286 M302,187 Q255,276 213,374 M334,196 Q288,226 254,283 M310,183 Q265,268 237,356 M344,199 Q261,256 194,334 M317,183 Q212,266 124,351 M307,199 Q292,279 276,378 M333,183 Q273,249 209,339 M300,181 Q226,251 140,346 M348,183 Q264,246 160,327 M349,200 Q279,222 208,283 M313,192 Q264,248 206,341 M308,183 Q304,264 291,367" stroke="#d4d4d4" stroke-width="1.2"/>
<!--/EXTRA-->
<path d="M460,350 C470,362 480,372 486,382 M500,360 C504,370 506,376 508,382" stroke="#555" stroke-width="2.6"/>
</g>
</g>
</svg>
<!--/SKETCH-->
<!--MENUS-->
<div class="menu" id="m1" style="left:106px;top:16.4px;width:173.6px;height:312.0px">
<div class="it" style="top:0.40px"><span class="l" style="left:14.6px">模式(<u>M</u>)</span><i class="ar"></i></div>
<div class="sep" style="top:17.68px"></div>
<div class="it hl" style="top:21.47px"><span class="l" style="left:14.6px">调整(<u>J</u>)</span><i class="ar"></i></div>
<div class="sep" style="top:38.75px"></div>
<div class="it" style="top:42.54px"><span class="l" style="left:14.6px">自动色调(<u>N</u>)</span><span class="r" style="right:12.2px">Shift+Ctrl+L</span></div>
<div class="it" style="top:57.23px"><span class="l" style="left:14.6px">自动对比度(<u>U</u>)</span><span class="r" style="right:12.2px">Alt+Shift+Ctrl+L</span></div>
<div class="it dis" style="top:71.92px"><span class="l" style="left:14.6px">自动颜色(<u>O</u>)</span><span class="r" style="right:12.2px">Shift+Ctrl+B</span></div>
<div class="sep" style="top:89.20px"></div>
<div class="it" style="top:92.99px"><span class="l" style="left:14.6px">图像大小(<u>I</u>)...</span><span class="r" style="right:12.2px">Alt+Ctrl+I</span></div>
<div class="it" style="top:107.68px"><span class="l" style="left:14.6px">画布大小(<u>S</u>)...</span><span class="r" style="right:12.2px">Alt+Ctrl+C</span></div>
<div class="it" style="top:122.37px"><span class="l" style="left:14.6px">图像旋转(<u>G</u>)</span><i class="ar"></i></div>
<div class="it dis" style="top:137.06px"><span class="l" style="left:14.6px">裁剪(<u>P</u>)</span></div>
<div class="it" style="top:151.75px"><span class="l" style="left:14.6px">裁切(<u>R</u>)...</span></div>
<div class="it" style="top:166.44px"><span class="l" style="left:14.6px">显示全部(<u>V</u>)</span></div>
<div class="sep" style="top:183.72px"></div>
<div class="it" style="top:187.51px"><span class="l" style="left:14.6px">复制(<u>D</u>)...</span></div>
<div class="it" style="top:202.20px"><span class="l" style="left:14.6px">应用图像(<u>Y</u>)...</span></div>
<div class="it" style="top:216.89px"><span class="l" style="left:14.6px">计算(<u>C</u>)...</span></div>
<div class="sep" style="top:234.17px"></div>
<div class="it" style="top:237.96px"><span class="l" style="left:14.6px">变量(<u>B</u>)</span><i class="ar"></i></div>
<div class="it dis" style="top:252.65px"><span class="l" style="left:14.6px">应用数据组(<u>L</u>)...</span></div>
<div class="sep" style="top:269.93px"></div>
<div class="it dis" style="top:273.72px"><span class="l" style="left:14.6px">陷印(<u>T</u>)...</span></div>
<div class="sep" style="top:291.00px"></div>
<div class="it" style="top:294.79px"><span class="l" style="left:14.6px">分析(<u>A</u>)</span><i class="ar"></i></div>
</div>
<div class="menu" id="m2" style="left:276.4px;top:37.4px;width:155.4px;height:366.8px">
<div class="it" style="top:0.40px"><span class="l" style="left:14.2px">亮度/对比度(<u>C</u>)...</span></div>
<div class="it" style="top:15.09px"><span class="l" style="left:14.2px">色阶(<u>L</u>)...</span><span class="r" style="right:11.8px">Ctrl+L</span></div>
<div class="it" style="top:29.78px"><span class="l" style="left:14.2px">曲线(<u>U</u>)...</span><span class="r" style="right:11.8px">Ctrl+M</span></div>
<div class="it" style="top:44.47px"><span class="l" style="left:14.2px">曝光度(<u>E</u>)...</span></div>
<div class="sep" style="top:61.75px"></div>
<div class="it dis" style="top:65.54px"><span class="l" style="left:14.2px">自然饱和度(<u>V</u>)...</span></div>
<div class="it dis" style="top:80.23px"><span class="l" style="left:14.2px">色相/饱和度(<u>H</u>)...</span><span class="r" style="right:11.8px">Ctrl+U</span></div>
<div class="it dis" style="top:94.92px"><span class="l" style="left:14.2px">色彩平衡(<u>B</u>)...</span><span class="r" style="right:11.8px">Ctrl+B</span></div>
<div class="it dis" style="top:109.61px"><span class="l" style="left:14.2px">黑白(<u>K</u>)...</span><span class="r" style="right:11.8px">Alt+Shift+Ctrl+B</span></div>
<div class="it dis" style="top:124.30px"><span class="l" style="left:14.2px">照片滤镜(<u>F</u>)...</span></div>
<div class="it dis" style="top:138.99px"><span class="l" style="left:14.2px">通道混合器(<u>X</u>)...</span></div>
<div class="it dis" style="top:153.68px"><span class="l" style="left:14.2px">颜色查找...</span></div>
<div class="sep" style="top:170.96px"></div>
<div class="it hl" style="top:174.75px"><span class="l" style="left:14.2px">反相(<u>I</u>)</span><span class="r" style="right:11.8px">Ctrl+I</span></div>
<div class="it" style="top:189.44px"><span class="l" style="left:14.2px">色调分离(<u>P</u>)...</span></div>
<div class="it" style="top:204.13px"><span class="l" style="left:14.2px">阈值(<u>T</u>)...</span></div>
<div class="it" style="top:218.82px"><span class="l" style="left:14.2px">渐变映射(<u>G</u>)...</span></div>
<div class="it dis" style="top:233.51px"><span class="l" style="left:14.2px">可选颜色(<u>S</u>)...</span></div>
<div class="sep" style="top:250.79px"></div>
<div class="it" style="top:254.58px"><span class="l" style="left:14.2px">阴影/高光(<u>W</u>)...</span></div>
<div class="it" style="top:269.27px"><span class="l" style="left:14.2px">HDR 色调...</span></div>
<div class="it" style="top:283.96px"><span class="l" style="left:14.2px">变化...</span></div>
<div class="sep" style="top:301.24px"></div>
<div class="it dis" style="top:305.03px"><span class="l" style="left:14.2px">去色(<u>D</u>)</span><span class="r" style="right:11.8px">Shift+Ctrl+U</span></div>
<div class="it dis" style="top:319.72px"><span class="l" style="left:14.2px">匹配颜色(<u>M</u>)...</span></div>
<div class="it" style="top:334.41px"><span class="l" style="left:14.2px">替换颜色(<u>R</u>)...</span></div>
<div class="it" style="top:349.10px"><span class="l" style="left:14.2px">色调均化(<u>Q</u>)</span></div>
</div>
<!--/MENUS-->
</body>
</html>
